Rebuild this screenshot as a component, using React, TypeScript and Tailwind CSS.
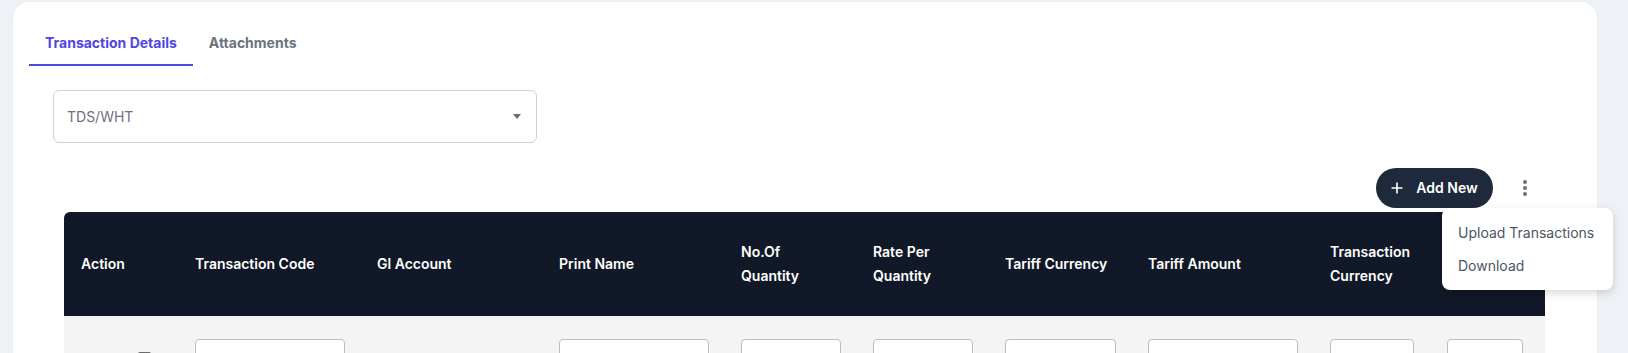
import {useState} from 'react';

type Column = {
	label: string[];
	width: string;
	input?: string;
};

// last column's heading sits under the open menu, so it is left out
const columns: Column[] = [
	{label: ['Action'], width: 'w-[114px]'},
	{label: ['Transaction Code'], width: 'w-[182px]', input: 'w-[150px]'},
	{label: ['Gl Account'], width: 'w-[182px]'},
	{label: ['Print Name'], width: 'w-[182px]', input: 'w-[150px]'},
	{label: ['No.Of', 'Quantity'], width: 'w-[132px]', input: 'w-[100px]'},
	{label: ['Rate Per', 'Quantity'], width: 'w-[132px]', input: 'w-[100px]'},
	{label: ['Tariff Currency'], width: 'w-[143px]', input: 'w-[111px]'},
	{label: ['Tariff Amount'], width: 'w-[182px]', input: 'w-[150px]'},
	{label: ['Transaction', 'Currency'], width: 'w-[117px]', input: 'w-[84px]'},
	{label: [], width: 'w-[98px]', input: 'w-[76px]'},
];

type Tab = 'details' | 'attachments';

export default function App() {
	const [activeTab, setActiveTab] = useState<Tab>('details');
	const [menuOpen, setMenuOpen] = useState(true);

	return (
			<div className="h-[353px] overflow-hidden bg-[#eef1f6] font-['Inter',sans-serif]">
				<div className="relative ml-[13px] mt-[2px] w-[1584px] h-[420px] rounded-2xl bg-white px-4 pt-5 shadow-[0_0_2px_rgba(0,0,0,0.06)]">
					<div className="flex">
						<button
								onClick={() => setActiveTab('details')}
								className={`h-[44px] px-4 text-sm font-bold border-b-2 ${
										activeTab === 'details' ? 'text-[#4f46e5] border-[#4f46e5]' : 'text-[#6b7280] border-transparent'
								}`}
						>
							Transaction Details
						</button>
						<button
								onClick={() => setActiveTab('attachments')}
								className={`h-[44px] px-4 text-sm font-bold border-b-2 ${
										activeTab === 'attachments' ? 'text-[#4f46e5] border-[#4f46e5]' : 'text-[#6b7280] border-transparent'
								}`}
						>
							Attachments
						</button>
					</div>

					<div className="ml-6 mt-6 flex h-[53px] w-[484px] items-center justify-between rounded-md border border-[#cfd2d6] pl-[13px] pr-[15px]">
						<span className="text-sm text-[#6b7280]">TDS/WHT</span>
						<span className="h-0 w-0 border-x-[4.5px] border-t-[5px] border-x-transparent border-t-[#6b6b6b]"/>
					</div>

					<div className="relative mr-[36px] mt-[25px] flex items-center justify-end gap-3">
						<button className="flex h-[40px] w-[117px] items-center justify-center gap-[13px] rounded-full bg-[#1e293b] text-sm font-semibold text-white">
							<svg width="12" height="12" viewBox="0 0 12 12" fill="none" stroke="currentColor" strokeWidth="1.6">
								<path d="M6 0.5v11M0.5 6h11"/>
							</svg>
							Add New
						</button>
						<button
								onClick={() => setMenuOpen(!menuOpen)}
								className="flex h-[40px] w-[40px] flex-col items-center justify-center gap-[2.5px]"
						>
							<span className="h-[3.5px] w-[3.5px] rounded-full bg-[#6b7280]"/>
							<span className="h-[3.5px] w-[3.5px] rounded-full bg-[#6b7280]"/>
							<span className="h-[3.5px] w-[3.5px] rounded-full bg-[#6b7280]"/>
						</button>
						{menuOpen && (
								<div className="absolute right-[-68px] top-[40px] z-10 w-[171px] rounded-lg bg-white py-2 shadow-[0_3px_10px_rgba(0,0,0,0.16)]">
									<div className="flex h-[33px] items-center px-4 text-sm text-[#4b5563]">Upload Transactions</div>
									<div className="flex h-[33px] items-center px-4 text-sm text-[#4b5563]">Download</div>
								</div>
						)}
					</div>

					<div className="ml-[35px] mt-1 w-[1481px]">
						<div className="flex h-[104px] items-center rounded-tl-md rounded-tr-[2px] bg-[#111827] pl-[17px] text-sm font-semibold leading-6 text-white">
							{columns.map((col, idx) => (
									<div key={idx} className={`${col.width} shrink-0`}>
										{col.label.map((line) => (
												<div key={line}>{line}</div>
										))}
									</div>
							))}
						</div>
						<div className="flex h-[120px] items-start bg-[#f4f4f4] pl-[17px] pt-[23px]">
							{columns.map((col, idx) => (
									<div key={idx} className={`${col.width} shrink-0`}>
										{idx === 0 ? (
												<div className="ml-[57px] mt-[13px] h-[13px] w-[13px] rounded-[2px] border-2 border-[#6b6b6b]"/>
										) : col.input ? (
												<div className={`${col.input} h-[40px] rounded border border-[#bdbdbd] bg-white`}/>
										) : null}
									</div>
							))}
						</div>
					</div>
				</div>
			</div>
	);
}
